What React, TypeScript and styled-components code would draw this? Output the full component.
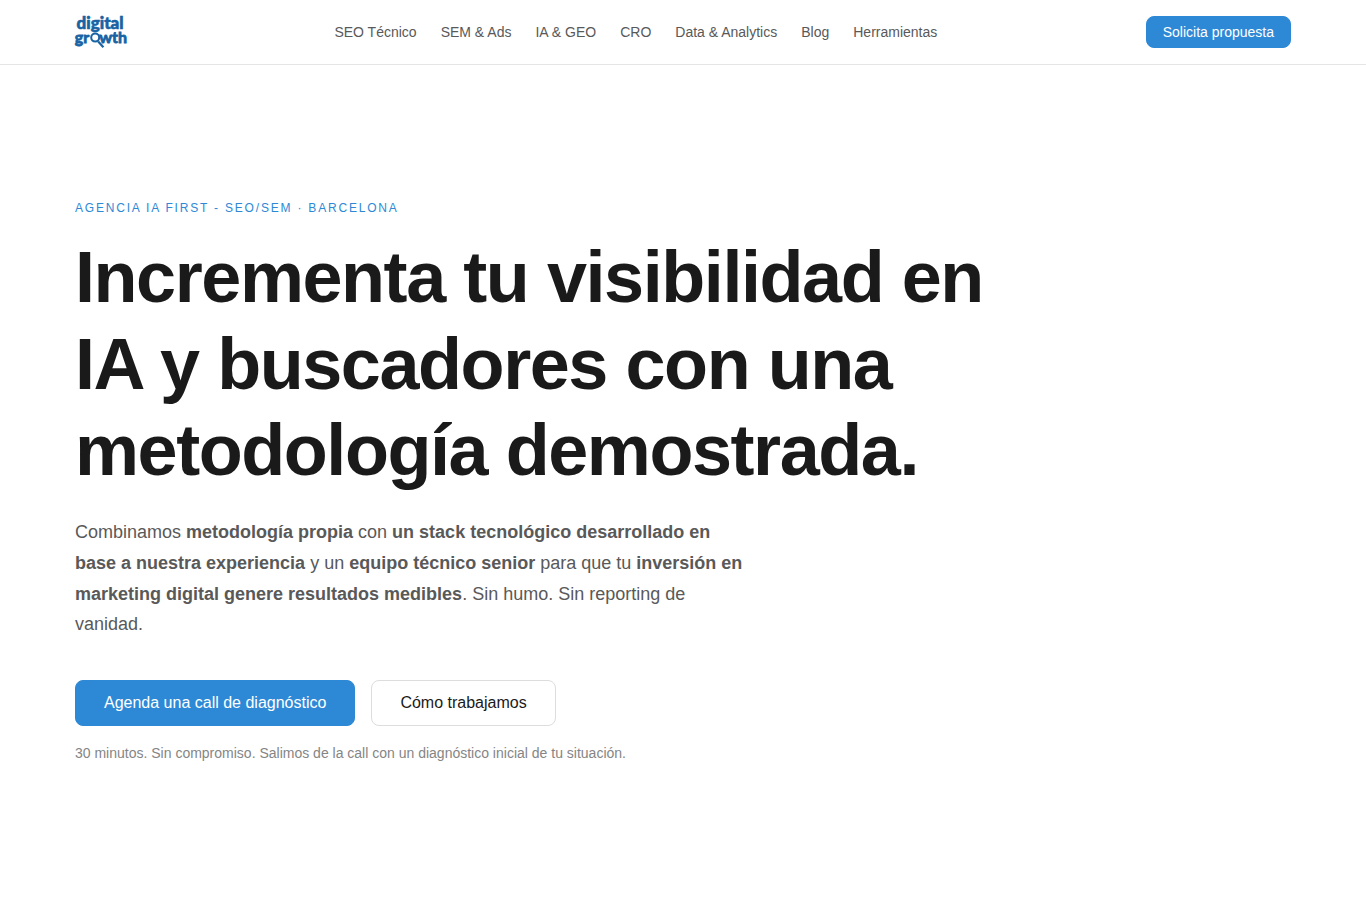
import React from "react";
import styled, { createGlobalStyle, css } from "styled-components";

const color = {
  ink: "#1a1a1a",
  body: "#595959",
  muted: "#858585",
  line: "#e5e5e5",
  brand: "#2d89d6",
  logo: "#1763a3",
};

const GlobalStyle = createGlobalStyle`
  *, *::before, *::after { box-sizing: border-box; }
  body {
    margin: 0;
    background: #ffffff;
    color: ${color.ink};
    font-family: "Liberation Sans", Arial, Helvetica, sans-serif;
    font-size: 16px;
    line-height: 1.7;
  }
`;

const Page = styled.div`
  display: flex;
  flex-direction: column;
  min-height: 100vh;
`;

const container = css`
  width: 100%;
  max-width: 1280px;
  margin: 0 auto;
  padding: 0 32px;
`;

const Header = styled.header`
  border-bottom: 1px solid ${color.line};
`;

const HeaderInner = styled.div`
  ${container}
  display: flex;
  align-items: center;
  justify-content: space-between;
  min-height: 64px;
`;

const LogoLink = styled.a`
  display: flex;
`;

const NavList = styled.ul`
  display: flex;
  gap: 24px;
  margin: 0;
  padding: 0;
  list-style: none;
`;

const NavLink = styled.a`
  display: block;
  color: ${color.body};
  font-size: 14px;
  line-height: 24px;
  text-decoration: none;
  white-space: nowrap;
`;

const Button = styled.button<{ $size?: "small" | "large"; $outline?: boolean }>`
  border: 1px solid ${(p) => (p.$outline ? "#dddddd" : color.brand)};
  border-radius: 8px;
  background: ${(p) => (p.$outline ? "#ffffff" : color.brand)};
  color: ${(p) => (p.$outline ? color.ink : "#ffffff")};
  font-family: inherit;
  font-size: ${(p) => (p.$size === "small" ? "14px" : "16px")};
  line-height: ${(p) => (p.$size === "small" ? "16px" : "20px")};
  padding: ${(p) => (p.$size === "small" ? "7px 16px" : "12px 28px")};
  white-space: nowrap;
  cursor: pointer;
`;

const Main = styled.main`
  flex: 1;
  display: flex;
  align-items: center;
  padding-bottom: 3px;
`;

const Hero = styled.section`
  ${container}
`;

const Eyebrow = styled.p`
  margin: 0 0 16px;
  color: ${color.brand};
  font-size: 12px;
  line-height: 20px;
  letter-spacing: 0.15em;
  text-transform: uppercase;
`;

const Title = styled.h1`
  max-width: 960px;
  margin: 0 0 24px;
  font-size: 72px;
  font-weight: 700;
  line-height: 1.2;
  letter-spacing: -0.02em;
`;

const Lead = styled.p`
  max-width: 672px;
  margin: 0 0 40px;
  color: ${color.body};
  font-size: 18px;
  line-height: 1.7;
`;

const Actions = styled.div`
  display: flex;
  flex-wrap: wrap;
  gap: 16px;
`;

const Note = styled.p`
  margin: 16px 0 0;
  color: ${color.muted};
  font-size: 14px;
  line-height: 22px;
`;

const links = [
  "SEO Técnico",
  "SEM & Ads",
  "IA & GEO",
  "CRO",
  "Data & Analytics",
  "Blog",
  "Herramientas",
];

function Logo() {
  return (
    <svg
      width="51"
      height="32"
      viewBox="0 0 51 32"
      overflow="visible"
      role="img"
      aria-label="digital growth"
    >
      <g fill={color.logo} stroke={color.logo} fontFamily="Lato, sans-serif">
        <text x="1.6" y="13" fontSize="17" fontWeight="900" strokeWidth="0.6">
          digital
        </text>
        <g fontSize="16" fontWeight="700" strokeWidth="0.8">
          <text x="-0.2" y="26.6">gr</text>
          <text x="24.2" y="26.6">wth</text>
        </g>
      </g>
      <circle cx="20.2" cy="21.6" r="4" fill="#ffffff" stroke={color.logo} strokeWidth="2" />
      <path d="M23.2 25.4 L28.4 31.2" stroke={color.logo} strokeWidth="2.2" fill="none" />
    </svg>
  );
}

export default function App() {
  return (
    <Page>
      <GlobalStyle />
      <Header>
        <HeaderInner>
          <LogoLink href="#">
            <Logo />
          </LogoLink>
          <nav aria-label="Principal">
            <NavList>
              {links.map((label) => (
                <li key={label}>
                  <NavLink href="#">{label}</NavLink>
                </li>
              ))}
            </NavList>
          </nav>
          <Button type="button" $size="small">Solicita propuesta</Button>
        </HeaderInner>
      </Header>
      <Main>
        <Hero>
          <Eyebrow>Agencia IA First - SEO/SEM · Barcelona</Eyebrow>
          <Title>Incrementa tu visibilidad en IA y buscadores con una metodología demostrada.</Title>
          <Lead>
            Combinamos <strong>metodología propia</strong> con{" "}
            <strong>un stack tecnológico desarrollado en base a nuestra experiencia</strong> y un{" "}
            <strong>equipo técnico senior</strong> para que tu{" "}
            <strong>inversión en marketing digital genere resultados medibles</strong>. Sin humo. Sin
            reporting de vanidad.
          </Lead>
          <Actions>
            <Button type="button">Agenda una call de diagnóstico</Button>
            <Button type="button" $outline>Cómo trabajamos</Button>
          </Actions>
          <Note>30 minutos. Sin compromiso. Salimos de la call con un diagnóstico inicial de tu situación.</Note>
        </Hero>
      </Main>
    </Page>
  );
}
